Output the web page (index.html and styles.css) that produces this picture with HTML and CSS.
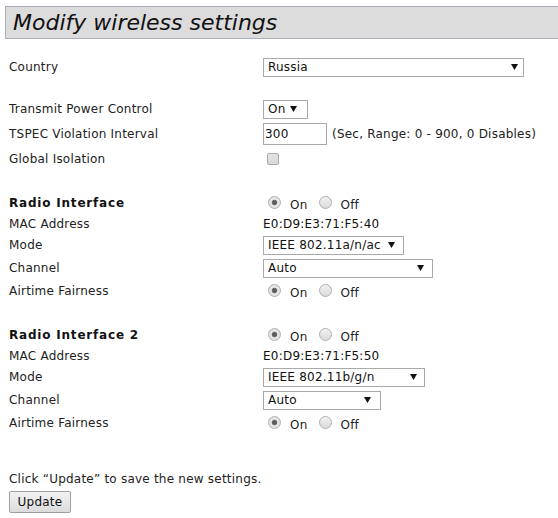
FILE: index.html
```html
<!DOCTYPE html>
<html>
<head>
<meta charset="utf-8">
<link rel="stylesheet" href="styles.css">
</head>
<body>
<h1 class="title">Modify wireless settings</h1>
<form class="form">
  <div class="row r-country"><span class="label">Country</span><select class="sel w-country"><option>Russia</option></select></div>
  <div class="row r-tpc"><span class="label">Transmit Power Control</span><select class="sel w-tpc"><option>On</option></select></div>
  <div class="row r-tspec"><span class="label">TSPEC Violation Interval</span><span class="ctl"><input class="txt" type="text" value="300"><span class="hint">(Sec, Range: 0 - 900, 0 Disables)</span></span></div>
  <div class="row r-iso"><span class="label">Global Isolation</span><input class="chk" type="checkbox"></div>

  <div class="row r-head first"><span class="label bold">Radio Interface</span><span class="radios"><input class="rad" type="radio" name="r1" checked><span class="rl">On</span><input class="rad" type="radio" name="r1"><span class="rl">Off</span></span></div>
  <div class="row r-mac"><span class="label">MAC Address</span><span class="val">E0:D9:E3:71:F5:40</span></div>
  <div class="row r-mode"><span class="label">Mode</span><select class="sel w-mode1"><option>IEEE 802.11a/n/ac</option></select></div>
  <div class="row r-chan"><span class="label">Channel</span><select class="sel w-chan1"><option>Auto</option></select></div>
  <div class="row r-air"><span class="label">Airtime Fairness</span><span class="radios"><input class="rad" type="radio" name="a1" checked><span class="rl">On</span><input class="rad" type="radio" name="a1"><span class="rl">Off</span></span></div>

  <div class="row r-head second"><span class="label bold">Radio Interface 2</span><span class="radios"><input class="rad" type="radio" name="r2" checked><span class="rl">On</span><input class="rad" type="radio" name="r2"><span class="rl">Off</span></span></div>
  <div class="row r-mac"><span class="label">MAC Address</span><span class="val">E0:D9:E3:71:F5:50</span></div>
  <div class="row r-mode"><span class="label">Mode</span><select class="sel w-mode2"><option>IEEE 802.11b/g/n</option></select></div>
  <div class="row r-chan"><span class="label">Channel</span><select class="sel w-chan2"><option>Auto</option></select></div>
  <div class="row r-air"><span class="label">Airtime Fairness</span><span class="radios"><input class="rad" type="radio" name="a2" checked><span class="rl">On</span><input class="rad" type="radio" name="a2"><span class="rl">Off</span></span></div>

  <p class="note">Click “Update” to save the new settings.</p>
  <button class="btn" type="button">Update</button>
</form>
</body>
</html>
```
FILE: styles.css
```css
html, body {
  margin: 0;
  padding: 0;
  background: #fff;
  overflow: hidden;
}
body {
  font-family: "DejaVu Sans", Verdana, sans-serif;
  font-size: 12px;
  color: #222;
}
.title {
  margin: 6px 0 0 5px;
  padding: 3px 6px 2px 7px;
  height: 26px;
  line-height: 26px;
  font-size: 22px;
  font-weight: normal;
  font-style: italic;
  color: #111;
  background: #dcdcdc;
  border: 1px solid #a9adc0;
  border-right: none;
}
.form {
  margin: 16px 0 0 9px;
  letter-spacing: 0.22px;
}
.row {
  display: flex;
  align-items: center;
}
.label {
  width: 254px;
  flex: none;
}
.bold {
  font-weight: bold;
  letter-spacing: 0.8px;
  color: #111;
}
.r-country { height: 24px; margin-bottom: 18px; }
.r-tpc { height: 24px; }
.r-tspec { height: 25px; }
.r-iso { height: 25px; }
.r-head { height: 24px; margin-top: 20px; }
.r-mac { height: 18px; }
.r-mode { height: 24px; }
.r-chan { height: 22px; }
.r-air { height: 24px; }

.sel {
  appearance: none;
  -webkit-appearance: none;
  height: 19px;
  margin: 0;
  padding: 0 0 0 4px;
  border: 1px solid #a9a9a9;
  border-radius: 0;
  background: #fff url("data:image/svg+xml;utf8,<svg xmlns='http://www.w3.org/2000/svg' width='7' height='6'><path d='M0 0H7L3.5 6Z' fill='%23111'/></svg>") no-repeat;
  font-family: inherit;
  font-size: 12px;
  letter-spacing: 0.22px;
  color: #111;
  line-height: 17px;
}
.w-country { width: 261px; background-position: right 5px center; }
.w-tpc { width: 45px; background-position: right 10px center; }
.w-mode1 { width: 141px; background-position: right 8px center; }
.w-chan1 { width: 170px; background-position: right 8px center; }
.w-mode2 { width: 162px; background-position: right 7px center; }
.w-chan2 { width: 118px; background-position: right 9px center; }

.ctl {
  display: flex;
  align-items: center;
}
.txt {
  box-sizing: border-box;
  width: 64px;
  height: 22px;
  margin: 0;
  padding: 0 1px;
  border: 1px solid #a9a9a9;
  font-family: inherit;
  font-size: 12px;
  letter-spacing: 0.22px;
  color: #111;
}
.hint {
  margin-left: 5px;
}
.chk {
  appearance: none;
  -webkit-appearance: none;
  box-sizing: border-box;
  width: 12px;
  height: 12px;
  margin: 0 0 0 4px;
  border: 1px solid #a8a8a8;
  border-radius: 2px;
  background: linear-gradient(#e4e4e4, #d8d8d8);
}
.radios {
  display: flex;
  align-items: center;
}
.rad {
  appearance: none;
  -webkit-appearance: none;
  box-sizing: border-box;
  width: 13px;
  height: 13px;
  margin: 0 0 0 5px;
  border: 1px solid #b0b0b0;
  border-radius: 50%;
  background: linear-gradient(#f2f2f2, #dadada);
  position: relative;
  top: -1px;
}
.rad:checked {
  background: radial-gradient(circle, #555 0, #666 2.2px, #e6e6e6 3.2px, #dcdcdc 100%);
}
.rl {
  margin-left: 9px;
  margin-right: 6px;
  position: relative;
  top: 2px;
}
.val {
  color: #111;
}
.note {
  margin: 36px 0 0 0;
  line-height: 16px;
}
.btn {
  margin-top: 4px;
  width: 62px;
  height: 22px;
  padding: 0;
  font-family: inherit;
  font-size: 12px;
  letter-spacing: 0.22px;
  color: #111;
  border: 1px solid #a0a0a0;
  border-radius: 2px;
  background: linear-gradient(#f2f2f2, #dcdcdc);
}
```
